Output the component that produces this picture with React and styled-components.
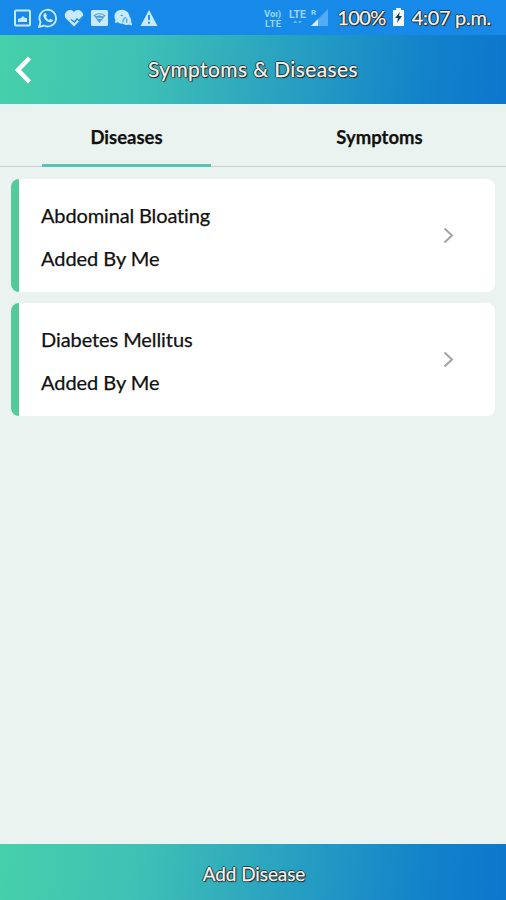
import React from "react";
import styled, { createGlobalStyle } from "styled-components";

const GlobalStyle = createGlobalStyle`
  * { box-sizing: border-box; }
  body { margin: 0; background: #ebf3f1; }
`;

const Screen = styled.div`
  display: flex;
  flex-direction: column;
  width: 506px;
  height: 900px;
  overflow: hidden;
  background: #ebf3f1;
  color: #111;
  font-family: Lato, "Open Sans", sans-serif;
`;

const Label = styled.span`
  font-size: ${(p) => p.$size || 20}px;
  font-weight: ${(p) => p.$weight || 400};
  letter-spacing: ${(p) => p.$track || 0}px;
  line-height: 24px;
  white-space: nowrap;
  -webkit-text-stroke: 0.25px currentColor;
`;

const OutlinedLabel = styled(Label)`
  color: #f3f3f3;
  text-shadow: 1px 0 #222c, -1px 0 #222c, 0 1px #222c, 0 -1px #222c, 1px 1px 1px #222;
`;

const StatusBar = styled.div`
  display: flex;
  align-items: center;
  justify-content: space-between;
  flex: none;
  height: 35px;
  padding: 0 15px 0 14px;
  background: #178ae9;
`;

const IconRow = styled.div`
  display: flex;
  align-items: center;
  gap: 6.6px;
`;

const StatusRight = styled.div`
  display: flex;
  align-items: center;
  padding-bottom: 1px;
`;

const Network = styled.svg`
  margin-right: 8px;
  font-family: Roboto, sans-serif;
  font-weight: 700;
`;

const Battery = styled.svg`
  margin: 0 8px 0 7px;
`;

const Header = styled.header`
  display: grid;
  grid-template-columns: 46px 1fr 46px;
  align-items: center;
  justify-items: center;
  flex: none;
  height: 69px;
  background: linear-gradient(97deg, #46d0aa 0%, #3fc0b5 28%, #2299c4 64%, #1282c9 84%, #0d76cd 100%);
`;

const Title = styled(OutlinedLabel)`
  padding-bottom: 2px;
`;

const BackButton = styled.button`
  display: flex;
  padding: 0;
  border: 0;
  background: none;
`;

const Tabs = styled.nav`
  display: grid;
  grid-template-columns: 1fr 1fr;
  flex: none;
  height: 63px;
  border-top: 2px solid #dcf8f8;
  box-shadow: inset 0 -1px #c9d1cf;
`;

const Tab = styled.div`
  display: flex;
  justify-content: center;
  width: 169px;
  margin: 0 auto;
  padding-top: 19px;
  border-bottom: 3px solid ${(p) => (p.$active ? "#56c4b8" : "transparent")};
`;

const List = styled.main`
  display: flex;
  flex: 1;
  flex-direction: column;
  gap: 11px;
  padding: 12px 11px 0;
`;

const Card = styled.article`
  display: flex;
  align-items: center;
  justify-content: space-between;
  height: 113px;
  padding: 0 41px 0 22px;
  border-left: 8px solid #53cb98;
  border-radius: 8px;
  background: #fff;
`;

const CardText = styled.div`
  display: flex;
  flex-direction: column;
  gap: 19px;
  padding-top: 1px;
`;

const Footer = styled.button`
  display: flex;
  align-items: center;
  justify-content: center;
  flex: none;
  height: 56px;
  padding: 3px 0 0 2px;
  border: 0;
  font-family: inherit;
  background: linear-gradient(97deg, #46d0aa 0%, #3fc0b5 28%, #2299c4 64%, #1282c9 84%, #0d76cd 100%);
`;

const light = "#c9e9ff";

function StatusIcons() {
  return (
    <IconRow>
      <svg width="17" height="18" viewBox="0 0 17 18">
        <rect x="1" y="1.5" width="15" height="15" rx="1" fill="none" stroke={light} strokeWidth="2" />
        <path d="M4 13V10l3-1 2-2 2 2h2v4z" fill={light} />
      </svg>
      <svg width="20" height="20" viewBox="0 0 20 20">
        <path d="M1.2 18.8l1.3-4.7A8.3 8.3 0 1 1 6 17.5z" fill="none" stroke={light} strokeWidth="1.9" />
        <path d="M6.3 5.4l1.5-.3 1.2 2.6-.9 1.2c.8 1.5 1.7 2.3 3.1 3l1.2-1.1 2.5 1.2c-.2 2-1.7 2.7-3.4 2.2-3-.9-5.3-3.1-6.1-5.8-.3-1.3 0-2.3.9-3z" fill={light} />
      </svg>
      <svg width="20" height="18" viewBox="0 0 20 18">
        <path d="M10 17.5L2 9.6C-2 4.7 5-2.5 10 3c5-5.5 12 1.7 8 6.6z" fill={light} />
        <path d="M7 10.5l3.5 2.5 2.5-3 2 1.5 4-4" fill="none" stroke="#178ae9" strokeWidth="1.4" />
      </svg>
      <svg width="17" height="18" viewBox="0 0 17 18">
        <rect y="1" width="17" height="16" rx="1.5" fill={light} />
        <path d="M2.5 6.2Q8.5 2.3 14.5 6.2L8.5 14z" fill="#4a9edb" />
        <path d="M4.5 7Q8.5 4.8 12.5 7M6.2 9.3h4.6" fill="none" stroke={light} strokeWidth="1.1" />
      </svg>
      <svg width="19" height="18" viewBox="0 0 19 18">
        <path d="M7 1a6.5 6.5 0 0 0-5.6 9.8L1 14l3-.8A7 7 0 1 0 7 1z" fill={light} />
        <path d="M6.5 6.5h2.5" stroke="#4aa8ec" strokeWidth="1.2" />
        <circle cx="12.5" cy="11.5" r="4.6" fill={light} />
        <path d="M14.5 15.5l3.5 1-.7-4" fill={light} />
        <path d="M9 13.5q-.5-4 3-5.2M12.7 9.5v4.3" fill="none" stroke="#4aa8ec" strokeWidth="1.3" />
      </svg>
      <svg width="18" height="18" viewBox="0 0 18 18">
        <path d="M9 1L17.5 17H.5z" fill={light} />
        <path d="M9 6v5M9 12.8v2" stroke="#178ae9" strokeWidth="1.8" />
      </svg>
    </IconRow>
  );
}

function NetworkIcons() {
  return (
    <Network width="65" height="22" viewBox="0 0 65 22" fill="#9cd5ff">
      <text x="0" y="11" fontSize="9.5" textLength="17">Voı)</text>
      <text x="1" y="20.5" fontSize="9.5" textLength="16">LTE</text>
      <text x="25" y="11.5" fontSize="10.5" textLength="17">LTE</text>
      <path d="M29 17l2.3-2.5 2.3 2.5zM34 15h4l-2 2.5z" opacity=".65" />
      <text x="47" y="9" fontSize="8">R</text>
      <path d="M47 20L64 3v17z" opacity=".45" />
      <path d="M47 20l7-7v7z" fill="#d2edff" />
    </Network>
  );
}

function Chevron() {
  return (
    <svg width="11" height="18" viewBox="0 0 11 18" fill="none" stroke="#a3a3a3" strokeWidth="2">
      <path d="M1.5 1.5l7.5 7-7.5 7" />
    </svg>
  );
}

const diseases = [
  { name: "Abdominal Bloating", track: -0.14, source: "Added By Me" },
  { name: "Diabetes Mellitus", track: -0.08, source: "Added By Me" },
];

export default function App() {
  return (
    <Screen>
      <GlobalStyle />
      <StatusBar>
        <StatusIcons />
        <StatusRight>
          <NetworkIcons />
          <OutlinedLabel $size={20} $track={-0.6}>100%</OutlinedLabel>
          <Battery width="11" height="18" viewBox="0 0 11 18">
            <path d="M3 0h5v2h3v16H0V2h3z" fill="#f4faff" />
            <path d="M6.8 4L2 10h3l-1 5 5-7H6z" fill="#173c57" />
          </Battery>
          <OutlinedLabel $size={20} $track={-0.3}>4:07 p.m.</OutlinedLabel>
        </StatusRight>
      </StatusBar>
      <Header>
        <BackButton aria-label="Back">
          <svg width="18" height="28" viewBox="0 0 18 28" fill="none" stroke="#fff" strokeWidth="4.5">
            <path d="M15.5 2L4 14l11.5 12" />
          </svg>
        </BackButton>
        <Title $size={21} $track={0.38}>Symptoms &amp; Diseases</Title>
      </Header>
      <Tabs>
        <Tab $active><Label $size={18.5} $weight={700}>Diseases</Label></Tab>
        <Tab><Label $size={18.5} $weight={700}>Symptoms</Label></Tab>
      </Tabs>
      <List>
        {diseases.map((d) => (
          <Card key={d.name}>
            <CardText>
              <Label $track={d.track}>{d.name}</Label>
              <Label $track={-0.05}>{d.source}</Label>
            </CardText>
            <Chevron />
          </Card>
        ))}
      </List>
      <Footer>
        <OutlinedLabel $size={19} $track={-0.1}>Add Disease</OutlinedLabel>
      </Footer>
    </Screen>
  );
}
